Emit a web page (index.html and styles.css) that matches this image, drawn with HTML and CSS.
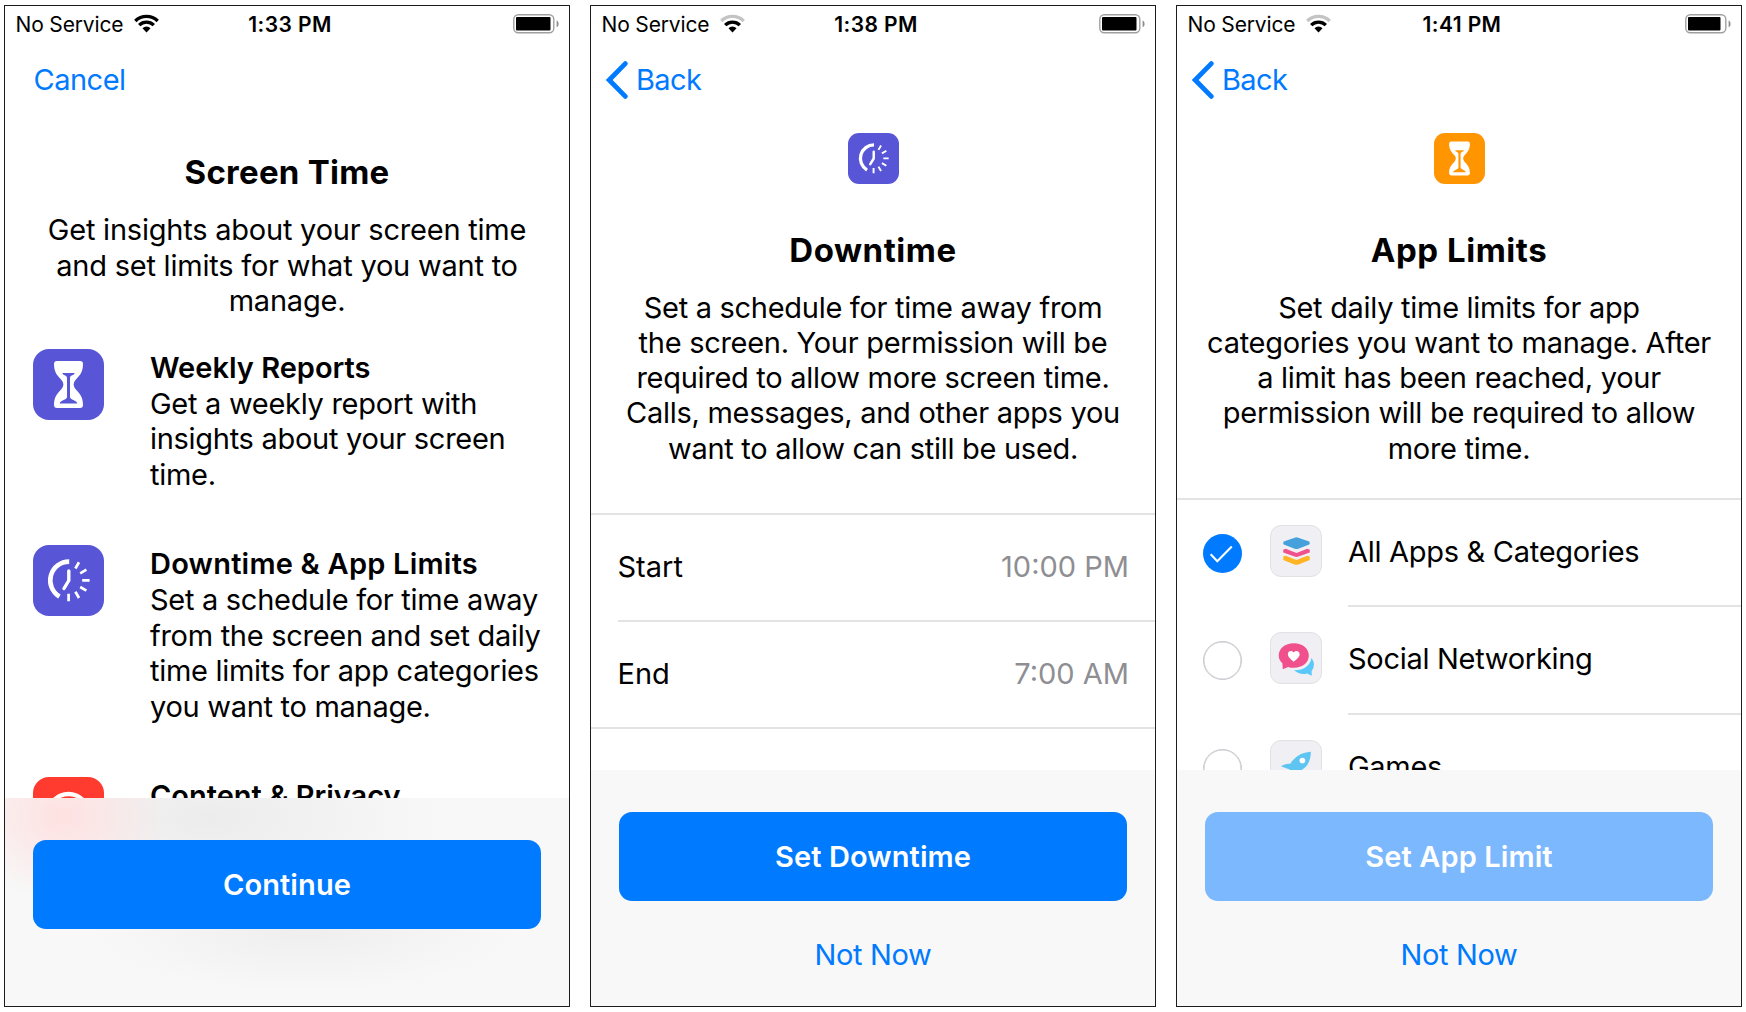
FILE: index.html
```html
<!DOCTYPE html>
<html lang="en">
<head>
<meta charset="utf-8">
<title>Screen Time setup</title>
<link rel="stylesheet" href="styles.css">
</head>
<body>
<svg class="defs" aria-hidden="true">
  <defs>
    <symbol id="hourglass" viewBox="0 0 71 71">
      <path fill="#fff" d="M24 12h23a3 3 0 0 1 3 3c0 9-4 12-7.500 16-2.500 3-2.500 6 0 9 3.500 4 7.500 7 7.500 16a3 3 0 0 1-3 3H24a3 3 0 0 1-3-3c0-9 4-12 7.500-16 2.500-3 2.500-6 0-9-3.500-4-7.500-7-7.500-16a3 3 0 0 1 3-3z"/>
      <path class="cut" d="M29.300 24h12.400c-.5 2.500-4.700 2-4.700 5v19c0 3 6.700 3 7.300 6.500H26.700c.6-3.500 7.300-3.500 7.300-6.500V29c0-3-4.200-2.500-4.700-5z"/>
    </symbol>
    <symbol id="downtime" viewBox="0 0 71 71">
      <g fill="none" stroke="#fff">
        <path stroke-width="4.6" d="M36.2 16.6A18.8 18.8 0 0 0 26.5 51.6"/>
        <path stroke-width="3.4" stroke-linejoin="round" stroke-linecap="round" d="M35.8 26v9.5L31 43.500"/>
        <path stroke-width="2.700" d="M42.400 23.500l3.600-6.200M47.200 28.300l6.200-3.600M49.200 35.300h7.400M47.200 42l6.200 3.600M42.400 46.800l3.600 6.200M35.600 48.800v7.400"/>
      </g>
    </symbol>
    <symbol id="battery" viewBox="0 0 47 20">
      <rect x=".8" y=".8" width="40" height="18" rx="4.5" fill="none" stroke="#a0a0a0" stroke-width="1.4"/>
      <path fill="#8c8c8c" d="M43.6 6.5c2.6.8 2.6 6 0 6.8z"/>
    </symbol>
    <symbol id="chevron" viewBox="0 0 22 38">
      <path d="M19.3 2.6L3.2 19l16.1 16.4" fill="none" stroke="#007aff" stroke-width="4.8" stroke-linecap="round" stroke-linejoin="miter"/>
    </symbol>
    <symbol id="wifi" viewBox="0 0 25 19">
      <g fill="none" stroke="#000" stroke-width="3.4">
        <path class="wave" d="M1.3 7a15.9 15.9 0 0 1 22.4 0"/>
        <path d="M5.2 11.1a10.4 10.4 0 0 1 14.6 0"/>
      </g>
      <path d="M12.5 18.4l-4-4.1a5.6 5.6 0 0 1 8 0z"/>
    </symbol>
  </defs>
</svg>

<main class="screens">
  <section class="phone">
    <header class="status">
      <span class="carrier">No Service <svg class="wifi"><use href="#wifi"/></svg></span>
      <span class="time">1:33 PM</span>
      <span class="battery"><svg><use href="#battery"/><rect class="charge" x="3" y="3" width="34.5" height="13.6" rx="1"/></svg></span>
    </header>
    <nav class="nav nav-cancel"><a>Cancel</a></nav>
    <div class="intro intro-plain">
      <h1>Screen Time</h1>
      <p>Get insights about your screen time<br>and set limits for what you want to<br>manage.</p>
    </div>
    <div class="features">
      <article class="feature">
        <svg class="badge purple"><use href="#hourglass"/></svg>
        <div><h2>Weekly Reports</h2><p>Get a weekly report with<br>insights about your screen<br>time.</p></div>
      </article>
      <article class="feature">
        <svg class="badge purple"><use href="#downtime"/></svg>
        <div><h2 class="wide">Downtime &amp; App Limits</h2><p>Set a schedule for time away<br>from the screen and set daily<br>time limits for app categories<br>you want to manage.</p></div>
      </article>
      <article class="feature">
        <svg class="badge red" viewBox="0 0 71 71"><circle cx="35.5" cy="37" r="20" fill="none" stroke="#fff" stroke-width="4.6"/></svg>
        <div><h2>Content &amp; Privacy</h2></div>
      </article>
    </div>
    <footer class="footer footer-continue"><button class="primary">Continue</button></footer>
  </section>

  <section class="phone">
    <header class="status">
      <span class="carrier">No Service <svg class="wifi weak"><use href="#wifi"/></svg></span>
      <span class="time">1:38 PM</span>
      <span class="battery"><svg><use href="#battery"/><rect class="charge" x="3" y="3" width="34.5" height="13.6" rx="1"/></svg></span>
    </header>
    <nav class="nav nav-back"><svg class="chevron"><use href="#chevron"/></svg><a>Back</a></nav>
    <div class="intro">
      <svg class="badge small purple"><use href="#downtime"/></svg>
      <h1 class="spaced">Downtime</h1>
      <p>Set a schedule for time away from<br>the screen. Your permission will be<br>required to allow more screen time.<br>Calls, messages, and other apps you<br>want to allow can still be used.</p>
    </div>
    <div class="schedule">
      <div class="row"><span>Start</span><span class="value">10:00 PM</span></div>
      <div class="row"><span>End</span><span class="value">7:00 AM</span></div>
    </div>
    <footer class="footer"><button class="primary">Set Downtime</button><a class="skip">Not Now</a></footer>
  </section>

  <section class="phone">
    <header class="status">
      <span class="carrier">No Service <svg class="wifi weak"><use href="#wifi"/></svg></span>
      <span class="time">1:41 PM</span>
      <span class="battery"><svg><use href="#battery"/><rect class="charge" x="3" y="3" width="32.5" height="13.6" rx="1"/></svg></span>
    </header>
    <nav class="nav nav-back"><svg class="chevron"><use href="#chevron"/></svg><a>Back</a></nav>
    <div class="intro">
      <svg class="badge small orange"><use href="#hourglass"/></svg>
      <h1 class="spaced">App Limits</h1>
      <p>Set daily time limits for app<br>categories you want to manage. After<br>a limit has been reached, your<br>permission will be required to allow<br>more time.</p>
    </div>
    <div class="categories">
      <div class="category">
        <span class="radio checked"><svg viewBox="0 0 39 39"><path d="M7.7 20.2l6.6 7.1L28.8 12.4" fill="none" stroke="#fff" stroke-width="2.1"/></svg></span>
        <svg class="tile" viewBox="0 0 51 51">
          <path fill="#ffb424" d="M12.5 31.2l2.5-.9 11 4.4 11-4.4 2.5.9v3.5L28 39.2q-2 .9-4 0L12.5 34.7z"/>
          <path fill="#f0508c" d="M12.5 24.2l2.5-1 11 4.3 11-4.3 2.5 1v2.8L28 31.2q-2 .8-4 0L12.5 27z"/>
          <path fill="#45a0dc" d="M24.2 11.9q1.8-.8 3.6 0l11.2 4q1.3 1.5 0 3l-11.2 4.3q-1.8.7-3.6 0L13 18.9q-1.3-1.5 0-3z"/>
        </svg>
        <span class="label">All Apps &amp; Categories</span>
      </div>
      <div class="category">
        <span class="radio"></span>
        <svg class="tile" viewBox="0 0 51 51">
          <path fill="#5ac8fa" d="M41.3 25.5q5.2 6.5.1 13.2l.2 5-4.8-2.5q-7.5 1.9-13.3-3.2 15.5-.2 17.8-12.500z"/>
          <path fill="#f0508c" d="M23.3 10.4c9 0 15.3 5.3 15.3 12.6s-6.3 12.5-15.3 12.5q-3.400 0-5.800-.9l-5.500 2.500-.4-6.300q-3.700-3.200-3.700-7.800c0-7.300 6.400-12.600 15.400-12.600z"/>
          <path fill="#fff" d="M23.2 29.2c-3-2.500-6-4.700-6-7.600 0-3.500 4.500-4.500 6-1.600 1.500-2.900 6-1.900 6 1.600 0 2.900-3 5.100-6 7.600z"/>
        </svg>
        <span class="label">Social Networking</span>
      </div>
      <div class="category">
        <span class="radio"></span>
        <svg class="tile" viewBox="0 0 51 51">
          <path fill="#5ec5f2" d="M40.7 11c-.3 8.500-2.700 14.700-10 19l-.7 10-5-6-6-5-9-3.200c3.200-2 6.200-3 9.700-2.600C24 16.500 30.500 11.600 40.700 11z"/>
          <circle cx="32" cy="20" r="2.9" fill="#fff"/>
        </svg>
        <span class="label">Games</span>
      </div>
    </div>
    <footer class="footer"><button class="primary disabled">Set App Limit</button><a class="skip">Not Now</a></footer>
  </section>
</main>
</body>
</html>
```
FILE: styles.css
```css
* { box-sizing: border-box; }

body {
  margin: 0;
  background: #fff;
  color: #000;
  font: 400 29px/35.3px Inter, "Liberation Sans", sans-serif;
  letter-spacing: -0.29px;
}

h1, h2, p { margin: 0; }

.defs { position: absolute; width: 0; height: 0; }

.screens {
  display: flex;
  gap: 20px;
  padding: 5px 4px 0;
}

.phone {
  position: relative;
  flex: none;
  width: 566px;
  height: 1002px;
  border: 1px solid #1c1c1e;
  overflow: hidden;
}

/* Status bar */
.status {
  display: grid;
  grid-template-columns: 1fr auto 1fr;
  align-items: center;
  height: 36px;
  padding: 1px 9px 0 10.5px;
  font-size: 21px;
  letter-spacing: -0.16px;
}

.carrier {
  display: flex;
  align-items: center;
  gap: 10.5px;
}

.wifi { width: 25px; height: 19px; margin-top: -2px; }
.weak { --wave: #c4c4c4; }
.wave { stroke: var(--wave, #000); }

.time {
  padding-left: 4.5px;
  font-weight: 600;
  letter-spacing: 0.4px;
}

.battery { display: flex; justify-content: flex-end; }
.battery svg { width: 47px; height: 20px; margin-top: -2px; }

/* Navigation bar */
.nav {
  display: flex;
  align-items: center;
  height: 76px;
  color: #007aff;
  letter-spacing: -0.5px;
}

.nav-cancel { padding-left: 28.5px; }
.nav-back { padding-left: 15px; gap: 8px; }
.nav-back a { letter-spacing: -0.6px; }
.chevron { width: 22px; height: 38px; }

/* Title block */
.intro {
  display: flex;
  flex-direction: column;
  align-items: center;
  padding-top: 15px;
  text-align: center;
}

.intro-plain { padding-top: 33.5px; }

h1 {
  font-size: 33px;
  line-height: 40px;
  font-weight: 700;
  letter-spacing: 0.25px;
  margin-bottom: 20px;
}

.spaced { letter-spacing: 0.55px; }
.intro-plain h1 { margin-bottom: 20.8px; }
.intro-plain p { letter-spacing: -0.22px; }

.badge {
  flex: none;
  width: 71px;
  height: 71px;
  border-radius: 16px;
}

.small {
  width: 51px;
  height: 51px;
  border-radius: 11px;
  margin-bottom: 45.5px;
}

.purple { background: #5856d6; --tint: #5856d6; }
.orange { background: #ff9500; --tint: #ff9500; }
.red { background: #ff3b30; }
.cut { fill: var(--tint); }

/* Feature list */
.features {
  display: flex;
  flex-direction: column;
  gap: 52.7px;
  padding: 30.4px 0 0 28px;
}

.feature {
  display: flex;
  gap: 46px;
  line-height: 35.6px;
  white-space: nowrap;
}

h2 {
  font-size: 29px;
  line-height: 37px;
  font-weight: 600;
  letter-spacing: 0;
}

.wide { letter-spacing: 0.22px; }

/* Schedule rows */
.schedule {
  margin-top: 47px;
  border-top: 2px solid #e3e3e5;
  border-bottom: 2px solid #e3e3e5;
}

.row {
  display: flex;
  justify-content: space-between;
  align-items: center;
  height: 105px;
  margin-left: 26.5px;
  padding: 0 26px 2px 0;
  letter-spacing: 0;
}

.row + .row { height: 107px; padding-bottom: 1px; border-top: 2px solid #e3e3e5; }
.value { color: #8e8e93; }

/* App categories */
.categories {
  margin-top: 32px;
  border-top: 2px solid #e3e3e5;
}

.category {
  display: flex;
  align-items: center;
  height: 107.3px;
  padding-left: 26px;
}

.radio {
  flex: none;
  width: 39px;
  height: 39px;
  border: 1.5px solid #c7c7cc;
  border-radius: 50%;
  box-shadow: inset 0 0 0 0.5px #c7c7cc;
}

.checked { border: 0; background: #007aff; box-shadow: none; }
.checked svg { display: block; }

.tile {
  flex: none;
  width: 52px;
  height: 52px;
  margin: -5px 0 0 27.5px;
  border: 1px solid #e2e2e6;
  border-radius: 11px;
  background: #efeff4;
}

.label {
  flex: 1;
  align-self: stretch;
  display: flex;
  align-items: center;
  margin-left: 26.5px;
  padding-bottom: 2px;
  border-bottom: 2px solid #e3e3e5;
}

/* Button area laid over the scrolling content */
.footer {
  position: absolute;
  inset: 763.5px 0 0;
  display: flex;
  flex-direction: column;
  align-items: center;
  padding-top: 42.5px;
  background: #f8f8f8;
}

.footer-continue {
  top: 792px;
  padding-top: 42px;
  background:
    radial-gradient(ellipse 105px 85px at 58px 18px, #ffe1e1, #ffe1e100),
    radial-gradient(ellipse 230px 100px at 205px 20px, #ececec, #ececec00),
    radial-gradient(ellipse 210px 65px at 300px 130px, #eeeeee, #eeeeee00),
    #f8f8f8;
}

.primary {
  flex: none;
  width: 508px;
  height: 88.5px;
  padding: 0;
  border: 0;
  border-radius: 13px;
  background: #007aff;
  color: #fff;
  font: 600 29px/35px Inter, "Liberation Sans", sans-serif;
  letter-spacing: 0.1px;
}

.disabled { background: #7cb8fd; }

.skip {
  margin-top: 36px;
  color: #007aff;
  letter-spacing: -0.35px;
}
```
